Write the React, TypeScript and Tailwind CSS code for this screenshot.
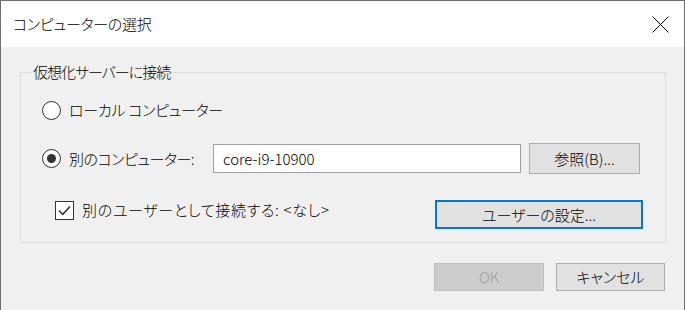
import { useState } from 'react';

const font = "font-['Noto_Sans_CJK_JP','Noto_Sans',sans-serif] [font-feature-settings:'palt']";

function Radio({ checked }: { checked: boolean }) {
  return (
    <span className="flex h-[19px] w-[19px] flex-shrink-0 items-center justify-center rounded-full border border-[#333333] bg-white">
      {checked && <span className="h-[9px] w-[9px] rounded-full bg-[#333333]" />}
    </span>
  );
}

function Checkbox({ checked }: { checked: boolean }) {
  return (
    <span className="mt-[1px] flex h-[19px] w-[19px] flex-shrink-0 items-center justify-center border border-[#333333] bg-white">
      {checked && (
        <svg width="15" height="15" viewBox="0 0 15 15">
          <path d="M2 7.5 L5.8 11.3 L13 3.5" fill="none" stroke="#333333" strokeWidth="1.6" />
        </svg>
      )}
    </span>
  );
}

export default function App() {
  const [remote, setRemote] = useState(true);
  const [otherUser, setOtherUser] = useState(true);
  const [host, setHost] = useState('core-i9-10900');

  return (
    <div className={`${font} box-border h-[310px] w-[685px] border-l border-r border-t border-[#6e6e6e] bg-[#f0f0f0] text-[15px] font-light text-black`}>
      <div className="flex h-[46px] items-center justify-between bg-white pl-[12px] pr-[15px]">
        <span className="text-[15px] leading-[20px] tracking-[-0.3px]">コンピューターの選択</span>
        <svg width="17" height="17" viewBox="0 0 17 17">
          <path d="M0.5 0.5 L16.5 16.5 M16.5 0.5 L0.5 16.5" stroke="#000" strokeWidth="1" />
        </svg>
      </div>

      <fieldset className="ml-[19px] mt-[15px] w-[646px] border border-[#dcdcdc] pb-[13px] pl-[21px] pr-[23px]">
        <legend className="-ml-[10px] px-[1px] leading-[20px] tracking-[-1px]">仮想化サーバーに接続</legend>

        <label className="mt-[18px] flex h-[20px] cursor-default items-center gap-[8px]" onClick={() => setRemote(false)}>
          <Radio checked={!remote} />
          <span className="leading-[20px] tracking-[-0.3px]">ローカル コンピューター</span>
        </label>

        <div className="mt-[23px] flex h-[31px] items-center">
          <label className="flex w-[171px] items-center gap-[8px]" onClick={() => setRemote(true)}>
            <Radio checked={remote} />
            <span className="leading-[20px] tracking-[-0.5px]">別のコンピューター:</span>
          </label>
          <input
            value={host}
            onChange={(e) => setHost(e.target.value)}
            className="box-border h-[29px] w-[308px] border border-[#a0a0a0] bg-white px-[9px] text-[15px] leading-[20px] outline-none"
          />
          <button className="ml-[8px] box-border h-[31px] w-[111px] border border-[#adadad] bg-[#e1e1e1] leading-[20px]">
            参照(B)...
          </button>
        </div>

        <div className="mt-[26px] flex h-[29px] items-start justify-between">
          <label className="ml-[13px] flex items-start gap-[8px]" onClick={() => setOtherUser(!otherUser)}>
            <Checkbox checked={otherUser} />
            <span className="leading-[20px] tracking-[0.7px]">別のユーザーとして接続する: &lt;なし&gt;</span>
          </label>
          <button className="-mr-[1px] box-border h-[29px] w-[208px] border-2 border-[#0078d7] bg-[#e1e1e1] leading-[20px]">
            ユーザーの設定...
          </button>
        </div>
      </fieldset>

      <div className="mr-[19px] mt-[20px] flex justify-end gap-[12px]">
        <button disabled className="box-border h-[28px] w-[110px] border border-[#bfbfbf] bg-[#cccccc] leading-[20px] text-[#a0a0a0]">
          OK
        </button>
        <button className="box-border h-[28px] w-[109px] border border-[#adadad] bg-[#e1e1e1] leading-[20px]">
          キャンセル
        </button>
      </div>
    </div>
  );
}
